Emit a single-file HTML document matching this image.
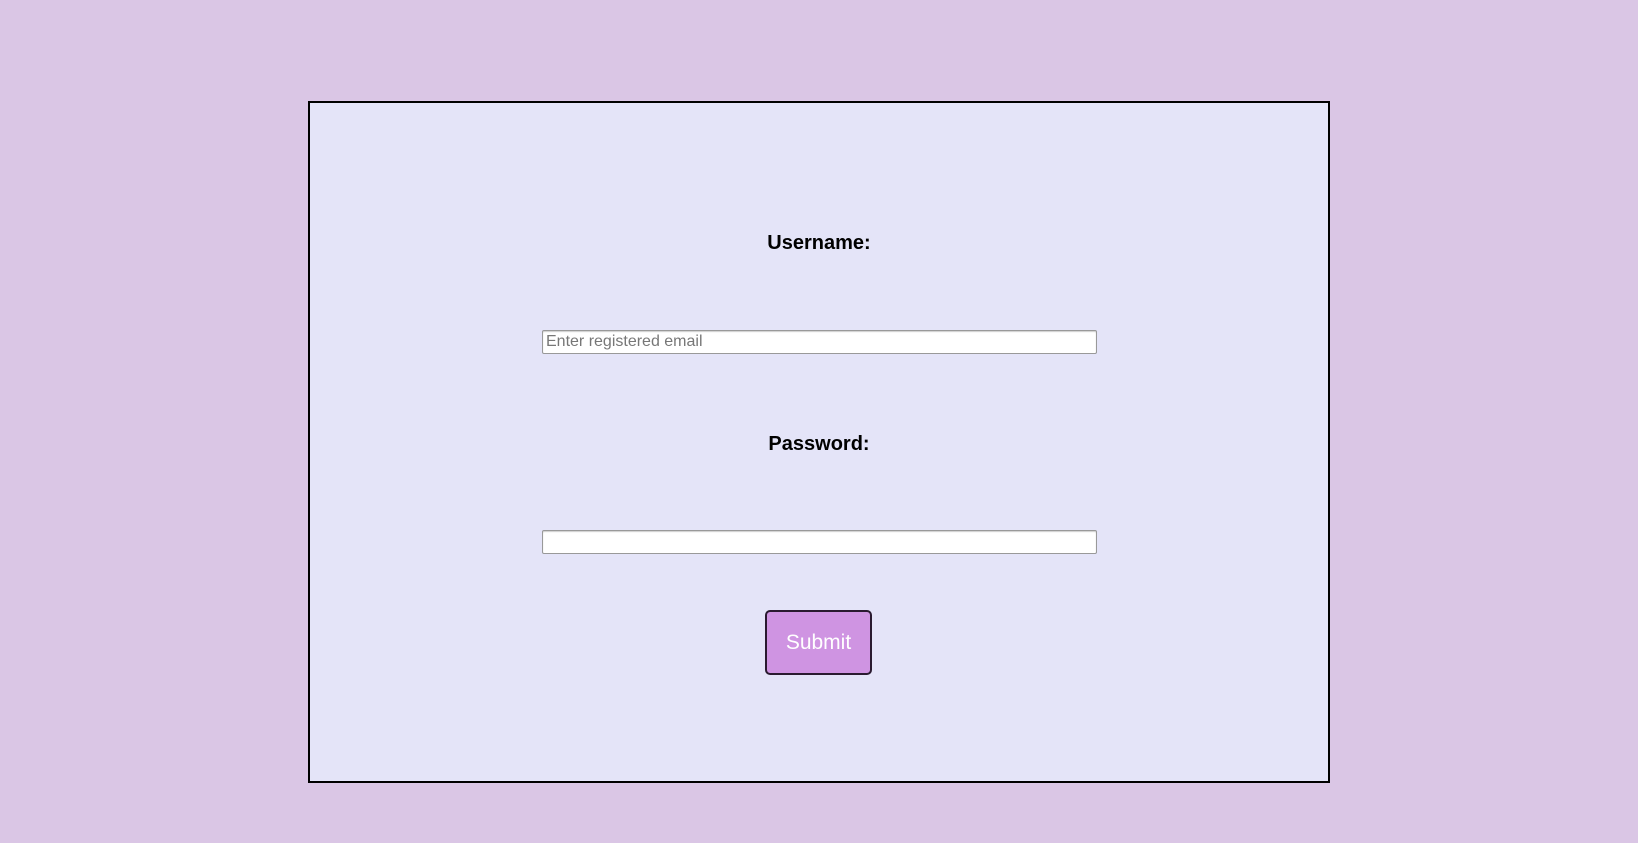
<!DOCTYPE html>
<html><head><meta charset="utf-8"><style>
html,body{margin:0;padding:0;width:1638px;height:843px;background:#dac6e5;overflow:hidden;font-family:"Liberation Sans",sans-serif;}
.box{position:absolute;left:308px;top:101px;width:1018px;height:678px;border:2px solid #000;background:#e4e4f8;}
.lbl{position:absolute;left:0;width:100%;text-align:center;font-weight:bold;font-size:20px;color:#000;}
.inp{position:absolute;left:232px;width:550px;height:22px;background:#fff;border:1px solid #999;border-radius:2px;box-shadow:inset 0 1px 1px #ccc;font-size:16px;color:#777;line-height:22px;padding-left:3px;box-sizing:content-box;}
.btn{position:absolute;left:455px;top:507px;width:107px;height:65px;box-sizing:border-box;background:#cf94e2;border:2px solid #2a1a30;border-radius:5px;color:#fff;font-size:21px;text-align:center;line-height:61px;}
</style></head><body>
<div class="box">
<div class="lbl" style="top:129px">Username:</div>
<div class="inp" style="top:227px">Enter registered email</div>
<div class="lbl" style="top:330px">Password:</div>
<div class="inp" style="top:427px"></div>
<div class="btn">Submit</div>
</div>
</body></html>
